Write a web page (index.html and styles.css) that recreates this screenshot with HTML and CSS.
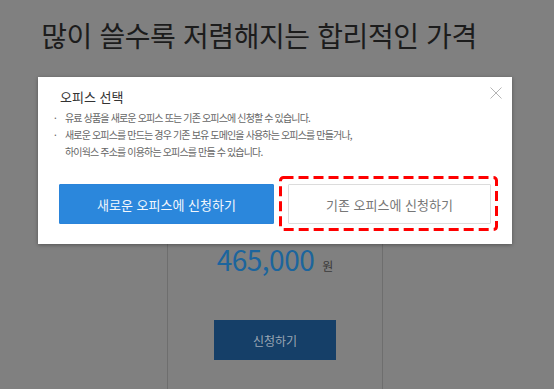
FILE: index.html
```html
<!DOCTYPE html>
<html lang="ko">
<head>
<meta charset="utf-8">
<title>오피스 선택</title>
<link rel="stylesheet" href="styles.css">
</head>
<body>
<div class="page">
  <h1 class="headline">많이 쓸수록 저렴해지는 합리적인 가격</h1>
  <div class="plans">
    <div class="plan plan-side"></div>
    <div class="plan plan-main">
      <div class="price"><span class="amount">465,000</span><span class="unit">원</span></div>
      <button class="apply">신청하기</button>
    </div>
    <div class="plan plan-side"></div>
  </div>
</div>

<div class="modal">
  <h2 class="modal-title">오피스 선택</h2>
  <button class="close" aria-label="닫기">
    <svg width="12" height="12" viewBox="0 0 12 12"><path d="M0.5 0.5L11.5 11.5M11.5 0.5L0.5 11.5" stroke="#b5b5b5" stroke-width="1" fill="none"/></svg>
  </button>
  <ul class="notes">
    <li>유료 상품을 새로운 오피스 또는 기존 오피스에 신청할 수 있습니다.</li>
    <li>새로운 오피스를 만드는 경우 기존 보유 도메인을 사용하는 오피스를 만들거나,<br>하이웍스 주소를 이용하는 오피스를 만들 수 있습니다.</li>
  </ul>
  <div class="actions">
    <button class="btn btn-primary">새로운 오피스에 신청하기</button>
    <div class="highlight">
      <button class="btn btn-secondary">기존 오피스에 신청하기</button>
      <svg class="dash" width="219" height="55" viewBox="0 0 219 55"><rect x="1.5" y="1.5" width="216" height="52" rx="3" ry="3" fill="none" stroke="#ff0000" stroke-width="3" stroke-dasharray="10 5"/></svg>
    </div>
  </div>
</div>
</body>
</html>
```
FILE: styles.css
```css
html, body {
  margin: 0;
  padding: 0;
}
body {
  width: 554px;
  height: 389px;
  overflow: hidden;
  background: #808080;
  font-family: "Noto Sans CJK KR", "Noto Sans", sans-serif;
  position: relative;
}
.page {
  display: flex;
  flex-direction: column;
}
.headline {
  margin: 17px 0 0;
  font-size: 28px;
  line-height: 36px;
  font-weight: 400;
  color: #1c1c1c;
  text-align: center;
  letter-spacing: -0.4px;
  padding-right: 36px;
}
.plans {
  display: grid;
  grid-template-columns: 167px 216px 1fr;
  margin-top: 30px;
  height: 306px;
}
.plan-main {
  border-left: 1px solid #6e6e6e;
  border-right: 1px solid #6e6e6e;
  display: flex;
  flex-direction: column;
  align-items: center;
  padding-top: 158px;
}
.price {
  display: flex;
  align-items: baseline;
  gap: 8px;
  height: 36px;
  line-height: 36px;
}
.amount {
  font-size: 28px;
  color: #1c659d;
  letter-spacing: -0.5px;
}
.unit {
  font-size: 12px;
  color: #3a3a3a;
}
.apply {
  margin-top: 43px;
  width: 122px;
  height: 40px;
  border: 0;
  background: #153f68;
  color: #9aa6b4;
  font-family: inherit;
  font-size: 12px;
  padding: 0;
}

.modal {
  position: absolute;
  left: 38px;
  top: 77px;
  width: 474px;
  height: 167px;
  box-sizing: border-box;
  background: #fff;
  box-shadow: 0 1px 4px rgba(0, 0, 0, 0.35);
  padding: 10px 21px 20px;
}
.modal-title {
  margin: 0;
  font-size: 13px;
  line-height: 20px;
  font-weight: 400;
  color: #333;
  padding-left: 1px;
}
.close {
  position: absolute;
  right: 10px;
  top: 10px;
  width: 12px;
  height: 12px;
  padding: 0;
  border: 0;
  background: none;
  display: flex;
}
.notes {
  list-style: none;
  margin: 2px 0 0;
  padding: 0;
  font-size: 10px;
  line-height: 17px;
  color: #666;
  letter-spacing: -0.85px;
}
.notes li {
  position: relative;
  padding-left: 6px;
}
.notes li::before {
  content: "·";
  position: absolute;
  left: -5px;
  top: 0;
}
.actions {
  display: flex;
  gap: 14px;
  margin-top: 24px;
}
.btn {
  height: 40px;
  padding: 0;
  font-family: inherit;
  font-size: 13px;
  border-radius: 1px;
}
.btn-primary {
  width: 215px;
  border: 1px solid #2a84da;
  background: #2b87dc;
  color: #f2f7fc;
}
.highlight {
  position: relative;
  display: flex;
}
.btn-secondary {
  width: 203px;
  border: 1px solid #dcdcdc;
  background: #fff;
  color: #777;
}
.dash {
  position: absolute;
  left: -9px;
  top: -8px;
  pointer-events: none;
}
```
